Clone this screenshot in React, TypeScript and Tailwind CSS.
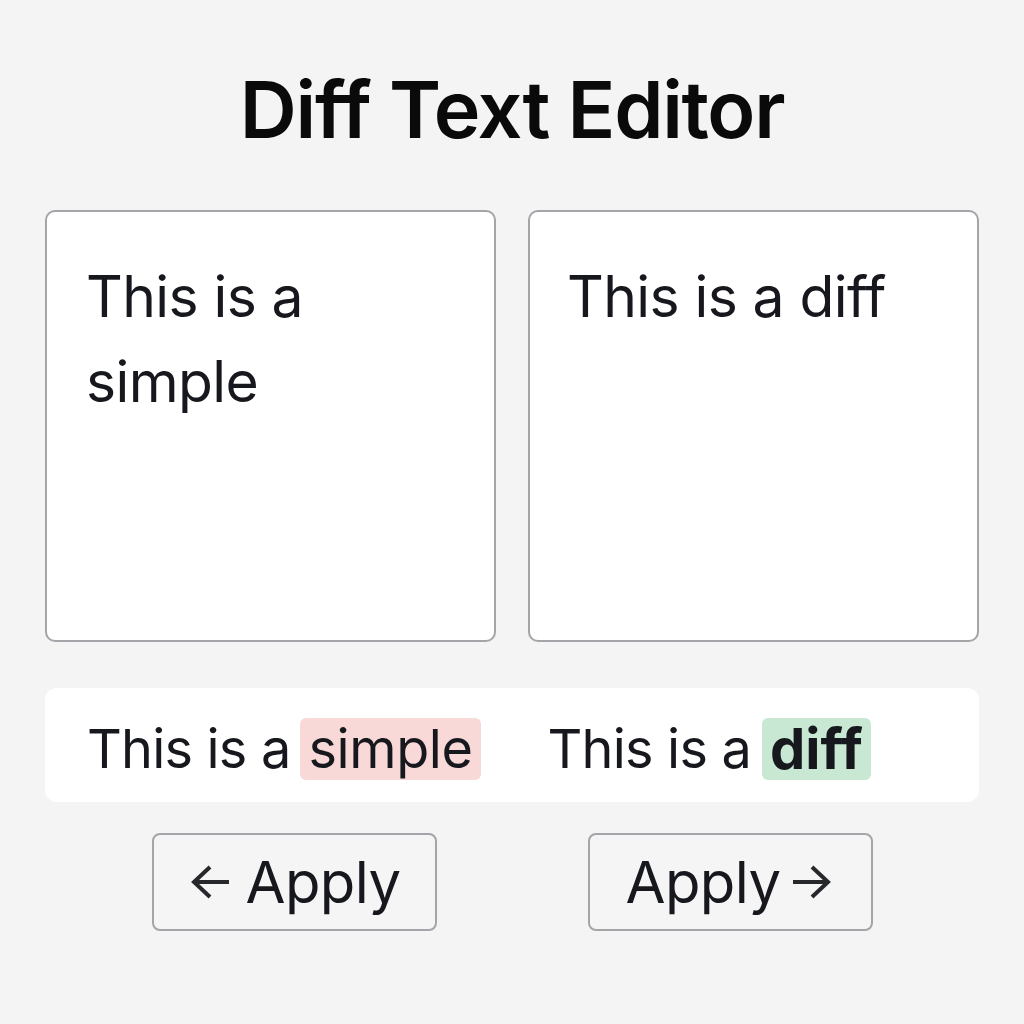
import React from "react";

function ArrowLeftIcon() {
  return (
    <svg width="42" height="36" viewBox="0 0 42 36" fill="none" stroke="#26282c" strokeWidth="4" strokeLinecap="butt" strokeLinejoin="miter">
      <path d="M41 18H5" />
      <path d="M22 3L6 18L22 33" />
    </svg>
  );
}

function ArrowRightIcon() {
  return (
    <svg width="42" height="36" viewBox="0 0 42 36" fill="none" stroke="#26282c" strokeWidth="4" strokeLinecap="butt" strokeLinejoin="miter">
      <path d="M1 18H37" />
      <path d="M20 3L36 18L20 33" />
    </svg>
  );
}

export default function App() {
  return (
    <div
      className="min-h-screen bg-[#f4f4f4] px-[45px] text-[#16181d]"
      style={{ fontFamily: "Inter, 'Noto Sans', sans-serif" }}
    >
      <h1 className="pt-[70px] text-center text-[79px] font-semibold leading-none text-[#0a0a0a] tracking-[-1.3px]">
        Diff Text Editor
      </h1>

      <div className="mt-[61px] grid grid-cols-2 gap-[32px]">
        <div className="h-[432px] rounded-[10px] border-2 border-[#a4a4a9] bg-white pl-[39px] pr-[40px] pt-[42px] text-[57px] leading-[85px] tracking-[-0.6px]">
          This is a simple
        </div>
        <div className="h-[432px] rounded-[10px] border-2 border-[#a4a4a9] bg-white pl-[37px] pr-[30px] pt-[42px] text-[57px] leading-[85px] tracking-[-0.6px]">
          This is a diff
        </div>
      </div>

      <div className="mt-[46px] flex h-[114px] items-center rounded-[12px] bg-white pl-[42px] pt-[8px] text-[54px] tracking-[-0.8px]">
        <span className="mr-[10px] whitespace-pre leading-[62px]">This is a</span>
        <span className="rounded-[6px] bg-[#f9d9d7] px-[8px] leading-[62px] tracking-[-0.4px]">simple</span>
        <span className="ml-[67px] mr-[11px] whitespace-pre leading-[62px]">This is a</span>
        <span className="rounded-[6px] bg-[#c8e8d4] px-[8px] text-[56px] font-bold leading-[62px] tracking-[0px]">diff</span>
      </div>

      <div className="mt-[31px] flex justify-center gap-[151px]">
        <button className="flex h-[98px] w-[285px] items-center justify-center gap-[16px] rounded-[8px] border-2 border-[#a4a4a9] bg-[#f5f5f5] text-[58px] leading-none tracking-[-0.6px] text-[#16181d]">
          <ArrowLeftIcon />
          <span>Apply</span>
        </button>
        <button className="flex h-[98px] w-[285px] items-center justify-center gap-[12px] rounded-[8px] border-2 border-[#a4a4a9] bg-[#f5f5f5] text-[58px] leading-none tracking-[-0.6px] text-[#16181d]">
          <span>Apply</span>
          <ArrowRightIcon />
        </button>
      </div>
    </div>
  );
}
